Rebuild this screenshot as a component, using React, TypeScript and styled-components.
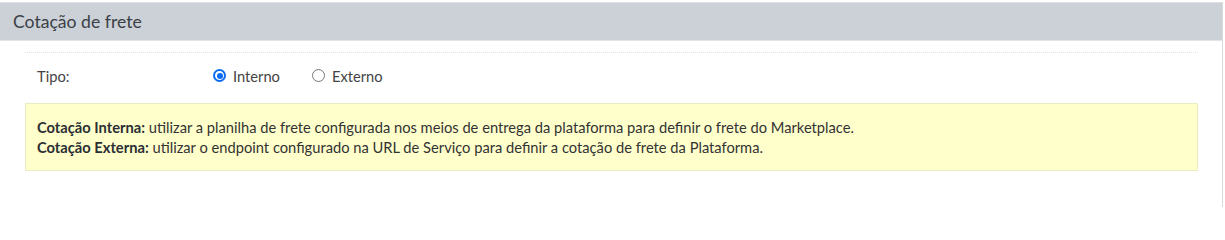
import React from "react";
import styled, { createGlobalStyle } from "styled-components";

const Global = createGlobalStyle`
  html, body { margin: 0; padding: 0; background: #ffffff; overflow: hidden; }
  body { font-family: Lato, "Noto Sans", "Liberation Sans", sans-serif; color: #333; }
`;

const Panel = styled.section`
  box-sizing: border-box;
  width: 1223px;
  margin-top: 2px;
  border-top: 1px solid #dde1e5;
  border-right: 1px solid #d6dadf;
  height: 205px;
  background: #fff;
`;

const Header = styled.header`
  height: 37px;
  background: #cbd1d7;
  display: flex;
  align-items: center;
  padding: 0 13px;
  font-size: 17.6px;
  color: #3b4046;
  border-bottom: 1px solid #e1e4e7;
`;

const Body = styled.div`
  padding: 11px 24px 0 25px;
`;

const Separator = styled.hr`
  margin: 0;
  border: 0;
  border-top: 1px dotted #e2e4e6;
  height: 0;
`;

const FieldRow = styled.div`
  display: flex;
  align-items: center;
  height: 45px;
  padding-left: 12px;
  font-size: 14.7px;
`;

const FieldLabel = styled.span`
  width: 176px;
  color: #444;
`;

const RadioGroup = styled.div`
  display: flex;
  align-items: center;
  gap: 32px;
`;

const RadioOption = styled.label`
  display: flex;
  align-items: center;
  gap: 7px;
  color: #444;
`;

const RadioDot = styled.span<{ $checked?: boolean }>`
  box-sizing: border-box;
  width: 13px;
  height: 13px;
  border-radius: 50%;
  border: ${(p) => (p.$checked ? "2px solid #0b6cf2" : "1px solid #767676")};
  display: flex;
  align-items: center;
  justify-content: center;
  &::after {
    content: "";
    display: ${(p) => (p.$checked ? "block" : "none")};
    width: 6px;
    height: 6px;
    border-radius: 50%;
    background: #0b6cf2;
  }
`;

const Notice = styled.div`
  margin-top: 5px;
  background: #ffffcc;
  border: 1px solid #ececc2;
  padding: 13px 11px;
  font-size: 14.7px;
  line-height: 20px;
  color: #333;
`;

const Strong = styled.strong`
  font-weight: 700;
  color: #2b2f33;
`;

export default function App() {
  return (
    <>
      <Global />
      <Panel>
        <Header>Cotação de frete</Header>
        <Body>
          <Separator />
          <FieldRow>
            <FieldLabel>Tipo:</FieldLabel>
            <RadioGroup>
              <RadioOption>
                <RadioDot $checked />
                Interno
              </RadioOption>
              <RadioOption>
                <RadioDot />
                Externo
              </RadioOption>
            </RadioGroup>
          </FieldRow>
          <Notice>
            <div>
              <Strong>Cotação Interna:</Strong> utilizar a planilha de frete configurada nos meios de entrega da plataforma para definir o frete do Marketplace.
            </div>
            <div>
              <Strong>Cotação Externa:</Strong> utilizar o endpoint configurado na URL de Serviço para definir a cotação de frete da Plataforma.
            </div>
          </Notice>
        </Body>
      </Panel>
    </>
  );
}
